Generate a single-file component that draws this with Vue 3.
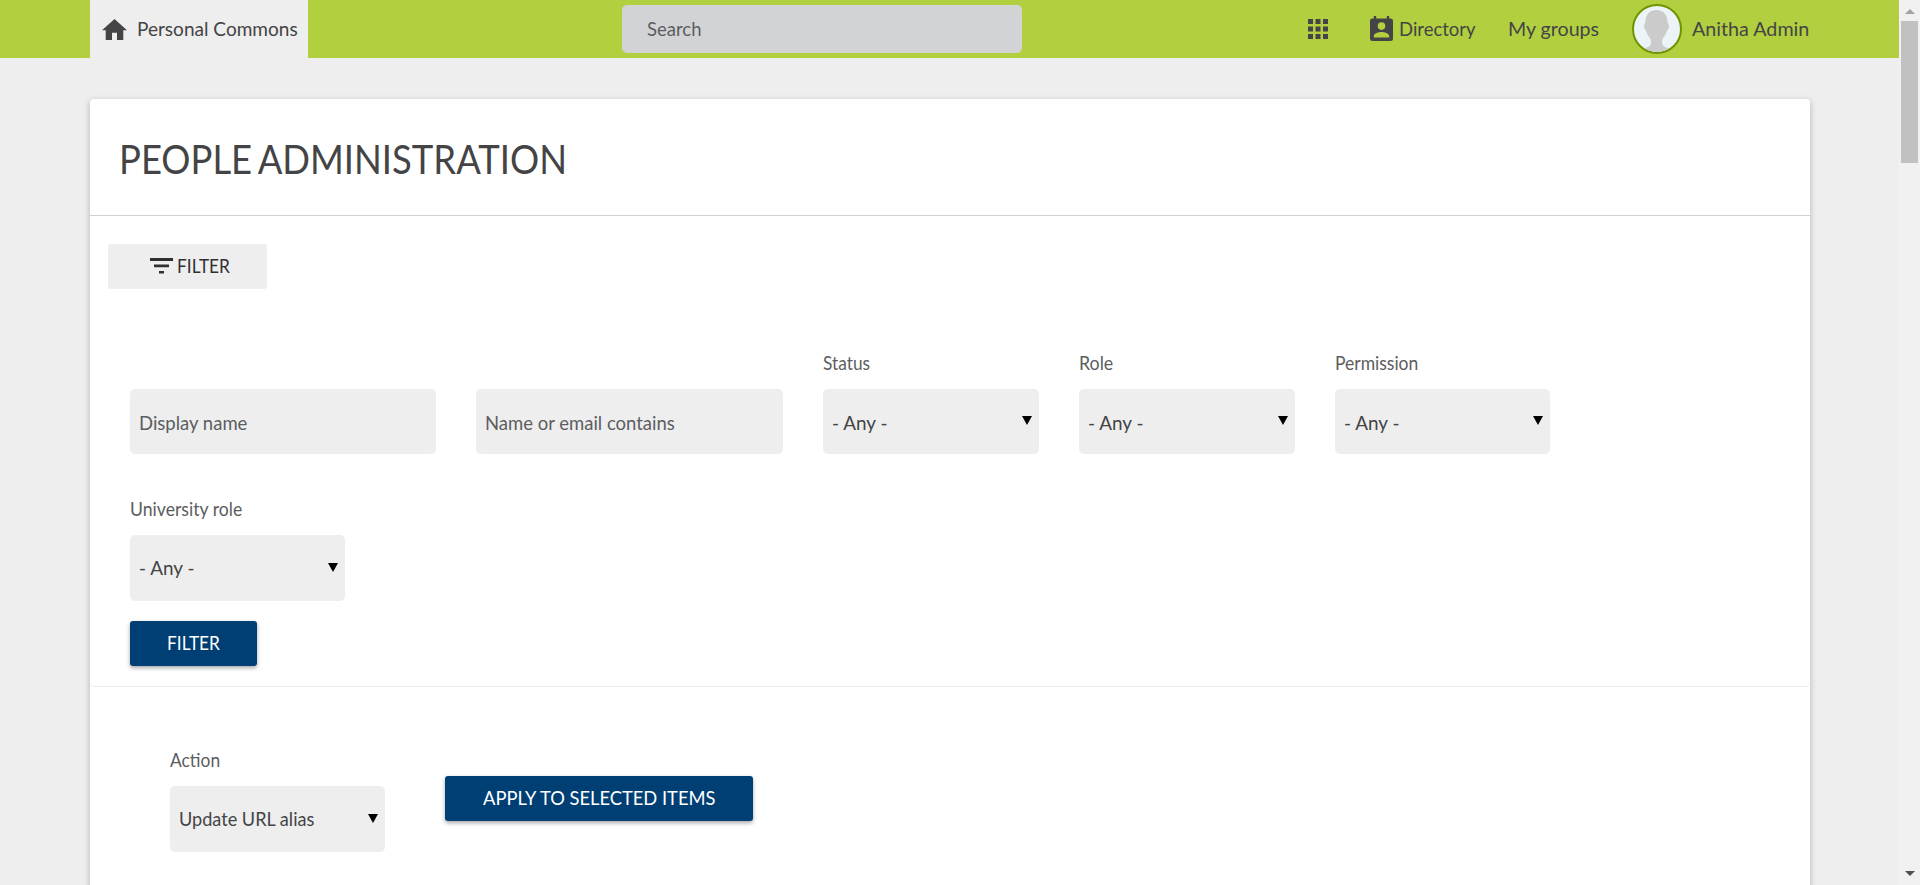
<script setup>
import { h } from 'vue'

// Text condensed horizontally by the factor k.
const Txt = (props) =>
  h('span', {
    style: { display: 'inline-block', whiteSpace: 'nowrap', transformOrigin: '0 50%', transform: `scaleX(${props.k})` }
  }, props.text)
Txt.props = ['text', 'k']

const selects = [
  { label: 'Status', k: 0.865 },
  { label: 'Role', k: 0.89 },
  { label: 'Permission', k: 0.875 },
  { label: 'University role', k: 0.882, tall: true }
]
</script>

<template>
  <div class="window">
    <div class="page">
      <header class="bar">
        <a class="tab">
          <svg class="home" viewBox="0 0 25 21"><path d="M12.5 0 0 11.2h3.700V21h6.300v-7.200h5V21h6.300v-9.800H25z" /></svg>
          <Txt text="Personal Commons" :k="0.952" />
        </a>
        <div class="search"><Txt text="Search" :k="0.925" /></div>
        <nav class="nav">
          <svg class="apps" viewBox="0 0 20 20">
            <path d="M0 0h5v5H0zM7.500 0h5v5h-5zM15 0h5v5h-5zM0 7.500h5v5H0zM7.500 7.500h5v5h-5zM15 7.500h5v5h-5zM0 15h5v5H0zM7.500 15h5v5h-5zM15 15h5v5h-5z" />
          </svg>
          <a class="directory">
            <svg class="contact" viewBox="0 0 23 25">
              <path fill-rule="evenodd" d="M3.800 0h2.400v2.600h10.600V0h2.400v2.600h1.300A2.500 2.500 0 0 1 23 5.100v17.400a2.500 2.500 0 0 1-2.500 2.500h-18A2.500 2.500 0 0 1 0 22.500V5.100a2.500 2.500 0 0 1 2.500-2.500h1.300zM11.500 6.300a3.800 3.800 0 1 0 0 7.600 3.800 3.800 0 0 0 0-7.600zM3.800 21.400h15.400v-1.300c0-2.600-5.100-4-7.700-4s-7.700 1.400-7.700 4z" />
            </svg>
            <Txt text="Directory" :k="0.925" />
          </a>
          <a class="groups"><Txt text="My groups" :k="0.98" /></a>
          <a class="user">
            <svg class="avatar" viewBox="0 0 50 50">
              <defs><clipPath id="face"><circle cx="25" cy="25" r="23" /></clipPath></defs>
              <circle cx="25" cy="25" r="24" fill="#ecf4f8" stroke="#6f9400" stroke-width="2" />
              <g clip-path="url(#face)">
                <path fill="#cbcbcb" d="M24.500 6C17 6 13.500 11 13.500 18c0 1-1.500 1.500-1.500 4s1.200 4 2.200 5c.8 3.500 2.800 5.500 4.300 8 1.500 6.500-1 8-7 9.500V50h26v-5.500c-6-1.500-8.500-3-7-9.500 1.500-2.500 3.500-4.500 4.300-8 1-1 2.200-2.500 2.200-5s-1.500-3-1.500-4c0-7-3.500-12-11-12z" />
              </g>
            </svg>
            <Txt text="Anitha Admin" :k="0.985" />
          </a>
        </nav>
      </header>

      <main class="card">
        <h1 class="title"><Txt text="PEOPLE ADMINISTRATION" :k="0.878" /></h1>
        <section class="filters">
          <button class="toggle">
            <svg class="lines" viewBox="0 0 23 16"><path d="M0 0h23v3H0zM4 6.600h15v2.600H4zM9 13h5v2.600H9z" /></svg>
            <Txt text="FILTER" :k="0.865" />
          </button>
          <form class="form" @submit.prevent>
            <div class="fields">
              <div class="input"><Txt text="Display name" :k="0.925" /></div>
              <div class="input"><Txt text="Name or email contains" :k="0.924" /></div>
              <div v-for="s in selects" :key="s.label" class="field">
                <label class="label"><Txt :text="s.label" :k="s.k" /></label>
                <div class="select" :class="{ tall: s.tall }"><Txt text="- Any -" :k="0.945" /><i class="arrow"></i></div>
              </div>
            </div>
            <button class="primary submit"><Txt text="FILTER" :k="0.865" /></button>
          </form>
        </section>
        <section class="actions">
          <div class="field">
            <label class="label"><Txt text="Action" :k="0.87" /></label>
            <div class="select tall"><Txt text="Update URL alias" :k="0.905" /><i class="arrow"></i></div>
          </div>
          <button class="primary apply"><Txt text="APPLY TO SELECTED ITEMS" :k="0.916" /></button>
        </section>
      </main>
    </div>
    <div class="scrollbar">
      <i class="up"></i>
      <div class="thumb"></div>
      <i class="down"></i>
    </div>
  </div>
</template>

<style>
body { overflow: hidden; }
</style>

<style scoped>
* { box-sizing: border-box; }
.window { display: flex; height: 885px; overflow: hidden; background: #eee; color: #444446; font: 20px/24px Lato, "Liberation Sans", sans-serif; }
.page { width: 1899px; height: 885px; overflow: hidden; }
svg { display: block; flex: none; fill: #444446; }
.bar span { margin-bottom: 2px; }
button span { margin-bottom: 4px; }

.bar { display: flex; height: 58px; padding-left: 90px; background: #b2cf40; align-items: center; }
.tab { display: flex; width: 218px; height: 58px; padding-left: 12px; align-items: center; background: #eee; }
.home { width: 25px; height: 21px; margin-right: 9px; }
.tab span { margin-left: 1px; }
.search { width: 400px; height: 48px; margin-left: 314px; padding: 11px 0 0 25px; border-radius: 5px; background: #d2d3d5; color: #5c5d60; }
.nav { display: flex; align-items: center; margin-left: 286px; }
.apps { width: 20px; height: 20px; }
.directory { display: flex; align-items: center; width: 138px; margin-left: 42px; }
.contact { width: 23px; height: 25px; margin: -2px 6px 0 0; }
.groups { width: 124px; }
.user { display: flex; align-items: center; }
.avatar { width: 50px; height: 50px; margin-right: 10px; }

.card { width: 1720px; height: 900px; margin: 41px 0 0 90px; border-radius: 4px; background: #fff; box-shadow: 0 2px 6px rgba(0, 0, 0, .25); }
.title { height: 117px; margin: 0; padding: 29px 0 0 29px; border-bottom: 1px solid #d0d0d0; font-size: 41.5px; line-height: 60px; font-weight: 400; word-spacing: -3px; }
.filters { padding-top: 28px; border-bottom: 1px solid #ebebeb; border-radius: 0 0 5px 5px; }
button { border: 0; padding: 0; font: inherit; text-align: left; }
.toggle { display: flex; align-items: center; width: 159px; height: 45px; margin-left: 18px; padding-left: 42px; border-radius: 3px; background: #eee; color: #303033; }
.lines { width: 23px; height: 16px; margin: -2px 4px 0 0; fill: #303033; }
.form { padding: 61px 40px 20px; }
.fields { display: grid; grid-template-columns: 306px 307px 216px 216px 215px; gap: 42px 40px; align-items: end; }
.input, .select { height: 65px; padding: 21px 0 0 9px; border-radius: 5px; background: #eee; }
.input { color: #5c5d60; }
.label { display: block; margin-bottom: 15px; color: #5c5d60; }
.select { display: flex; max-width: 216px; justify-content: space-between; padding-right: 7px; }
.arrow { width: 0; height: 0; margin-top: 6px; border: 5px solid transparent; border-top: 9px solid #000; border-bottom: 0; }
.primary { display: flex; align-items: center; height: 45px; border-radius: 3px; background: #003f74; color: #fff; box-shadow: 0 2px 4px rgba(0, 0, 0, .35); }
.submit { width: 127px; margin-top: 20px; padding-left: 37px; }
.actions { display: flex; padding: 60px 80px; gap: 60px; align-items: flex-start; }
.actions .field { width: 215px; }
.field .tall { width: 215px; height: 66px; padding-top: 20px; }
.tall .arrow { margin-top: 8px; }
.apply { width: 308px; margin-top: 29px; padding-left: 38px; }

.scrollbar { display: flex; flex-direction: column; align-items: center; width: 21px; height: 885px; background: #f1f1f1; }
.up { margin-top: 9px; border: 5px solid transparent; border-top: 0; border-bottom-color: #a3a3a3; }
.thumb { width: 17px; height: 142px; margin-top: 7px; background: #c1c1c1; }
.down { margin: auto 0 9px; border: 5px solid transparent; border-bottom: 0; border-top-color: #505050; }
</style>
